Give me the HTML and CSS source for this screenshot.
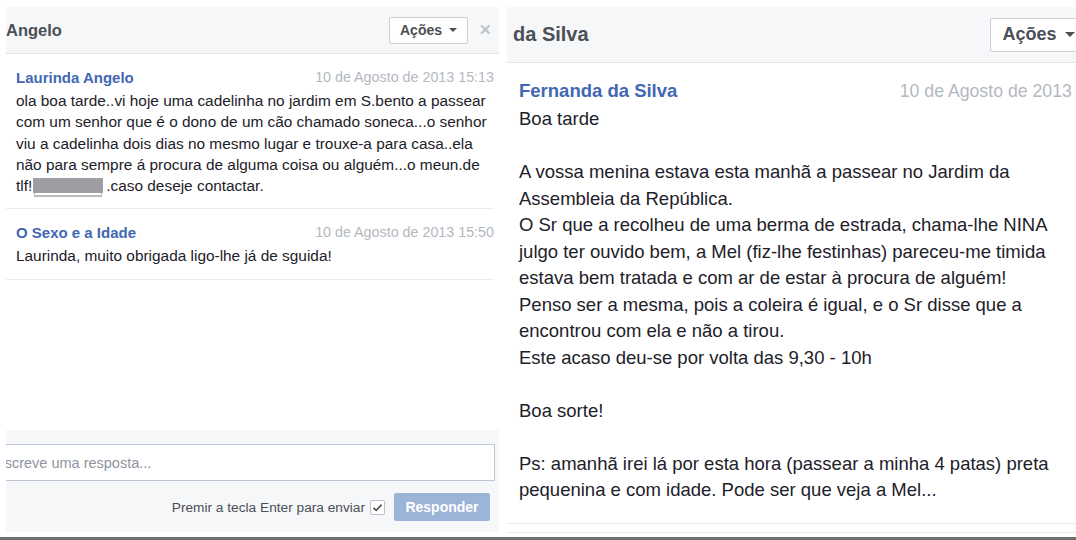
FILE: index.html
```html
<!DOCTYPE html>
<html lang="pt">

<head>
  <meta charset="UTF-8" />
  <meta name="viewport" content="width=device-width, initial-scale=1.0" />
  <title>Mensagens</title>
  <link rel="stylesheet" href="styles.css">
</head>

<body>
  <div class="ecra">
    <section class="conversa pequena">
      <div class="cabecalho">
        <h2 class="titulo">Angelo</h2>
        <button class="acoes">Ações <span class="seta"></span></button>
        <span class="fechar">&#x2715;</span>
      </div>
      <div class="mensagens">
        <div class="mensagem">
          <div class="topo">
            <span class="autor">Laurinda Angelo</span>
            <span class="data">10 de Agosto de 2013 15:13</span>
          </div>
          <p class="texto">ola boa tarde..vi hoje uma cadelinha no jardim em S.bento a passear<br>com um senhor que é o dono de um cão chamado soneca...o senhor<br>viu a cadelinha dois dias no mesmo lugar e trouxe-a para casa..ela<br>não para sempre á procura de alguma coisa ou alguém...o meun.de<br>tlf!<span class="oculto"></span>.caso deseje contactar.</p>
        </div>
        <div class="mensagem">
          <div class="topo">
            <span class="autor">O Sexo e a Idade</span>
            <span class="data">10 de Agosto de 2013 15:50</span>
          </div>
          <p class="texto">Laurinda, muito obrigada ligo-lhe já de sguida!</p>
        </div>
      </div>
      <div class="rodape">
        <input type="text" class="resposta" placeholder="Escreve uma resposta..." />
        <div class="enviar">
          <span class="dica">Premir a tecla Enter para enviar</span>
          <span class="caixa">
            <svg width="11" height="9" viewBox="0 0 11 9"><path d="M1.5 4.8 L4.2 7.4 L9.6 1.6" fill="none" stroke="#4b4f56" stroke-width="1.6"/></svg>
          </span>
          <button class="responder">Responder</button>
        </div>
      </div>
    </section>

    <section class="conversa grande">
      <div class="cabecalho">
        <h2 class="titulo">da Silva</h2>
        <button class="acoes">Ações <span class="seta"></span></button>
        <span class="fechar">&#x2715;</span>
      </div>
      <div class="mensagens">
        <div class="mensagem">
          <div class="topo">
            <span class="autor">Fernanda da Silva</span>
            <span class="data">10 de Agosto de 2013 15:02</span>
          </div>
          <p class="texto">Boa tarde<br><br>A vossa menina estava esta manhã a passear no Jardim da<br>Assembleia da República.<br>O Sr que a recolheu de uma berma de estrada, chama-lhe NINA<br>julgo ter ouvido bem, a Mel (fiz-lhe festinhas) pareceu-me timida<br>estava bem tratada e com ar de estar à procura de alguém!<br>Penso ser a mesma, pois a coleira é igual, e o Sr disse que a<br>encontrou com ela e não a tirou.<br>Este acaso deu-se por volta das 9,30 - 10h<br><br>Boa sorte!<br><br>Ps: amanhã irei lá por esta hora (passear a minha 4 patas) preta<br>pequenina e com idade. Pode ser que veja a Mel...</p>
        </div>
        <div class="fim"></div>
      </div>
    </section>
  </div>
  <div class="borda"></div>
</body>

</html>
```

FILE: styles.css
```css
* {
  box-sizing: border-box;
}

body {
  margin: 0;
  width: 1076px;
  height: 540px;
  overflow: hidden;
  background: #fff;
  font-family: "Liberation Sans", Arial, Helvetica, sans-serif;
  color: #1d2129;
}

.ecra {
  display: flex;
  align-items: flex-start;
  gap: 8px;
  height: 537px;
  padding: 7px 0 0 6px;
}

.conversa {
  display: flex;
  flex-direction: column;
  flex: none;
  overflow: hidden;
}

.conversa.pequena {
  width: 493px;
  height: 525px;
}

.conversa.grande {
  width: 615px;
  height: 530px;
}

.cabecalho {
  display: flex;
  align-items: center;
  background: #f6f7f9;
  border-bottom: 1px solid #e3e5e8;
}

.titulo {
  flex: 1;
  margin: 0;
  font-weight: bold;
  color: #4b4f56;
}

.acoes {
  display: flex;
  align-items: center;
  background: #fff;
  border: 1px solid #ccd0d5;
  border-radius: 2px;
  font-family: inherit;
  font-weight: bold;
  color: #4b4f56;
  padding: 0;
}

.seta {
  width: 0;
  height: 0;
  border-left: 4px solid transparent;
  border-right: 4px solid transparent;
  border-top: 4px solid #4b4f56;
}

.fechar {
  color: #bec2c9;
  font-weight: bold;
}

.mensagens {
  flex: 1;
}

.mensagem {
  border-bottom: 1px solid #e9ebee;
}

.topo {
  display: flex;
  justify-content: space-between;
  align-items: center;
  white-space: nowrap;
}

.autor {
  font-weight: bold;
  color: #4267b2;
}

.data {
  color: #b4b8bf;
}

.texto {
  margin: 0;
  white-space: nowrap;
}

/* conversa da esquerda */

.pequena .cabecalho {
  height: 47px;
  padding-right: 7px;
}

.pequena .titulo {
  font-size: 16.5px;
}

.pequena .acoes {
  height: 27px;
  width: 79px;
  justify-content: center;
  gap: 7px;
  font-size: 14px;
}

.pequena .fechar {
  font-size: 15px;
  margin-left: 11px;
}

.pequena .mensagem {
  margin-right: 5px;
  padding: 13px 0 12px 10px;
}

.pequena .topo {
  height: 20px;
  margin-bottom: 3px;
}

.pequena .autor {
  font-size: 15px;
}

.pequena .data {
  font-size: 14.3px;
}

.pequena .texto {
  font-size: 15.4px;
  line-height: 21.3px;
}

.oculto {
  display: inline-block;
  width: 70px;
  height: 15px;
  margin: 0 3px 0 1px;
  vertical-align: -2px;
  background: #9d9ea3;
  box-shadow: 0 4px 0 -2px #fff, 0 5px 0 -1px #bbb;
}

.rodape {
  background: #f6f7f9;
  height: 102px;
  padding: 14px 9px 11px 0;
}

.resposta {
  display: block;
  width: 509px;
  height: 37px;
  margin: 0 0 0 -20px;
  padding: 0 0 0 8px;
  border: 1px solid #bdc7d8;
  font-family: inherit;
  font-size: 14.5px;
  outline: none;
}

.resposta::placeholder {
  color: #8d949e;
}

.enviar {
  display: flex;
  justify-content: flex-end;
  align-items: center;
  margin-top: 12px;
}

.dica {
  font-size: 13.7px;
  color: #4b4f56;
}

.caixa {
  display: flex;
  align-items: center;
  justify-content: center;
  width: 15px;
  height: 15px;
  margin-left: 5px;
  background: #fff;
  border: 1px solid #bec2c9;
  border-radius: 2px;
}

.responder {
  width: 96px;
  height: 28px;
  margin-left: 9px;
  background: #9cb4d8;
  border: none;
  border-radius: 2px;
  color: #fff;
  font-family: inherit;
  font-size: 14px;
  font-weight: bold;
}

/* conversa da direita, maior */

.grande .cabecalho {
  height: 56px;
  padding: 0 8px 0 6px;
}

.grande .titulo {
  font-size: 20px;
}

.grande .acoes {
  height: 34px;
  width: 97px;
  justify-content: center;
  gap: 8px;
  font-size: 18px;
}

.grande .seta {
  border-left-width: 5px;
  border-right-width: 5px;
  border-top-width: 5px;
}

.grande .fechar {
  font-size: 17px;
  margin-left: 13px;
}

.grande .mensagem {
  margin-right: 6px;
  padding: 16px 0 19px 12px;
}

.grande .topo {
  height: 24px;
  margin-right: -5px;
  margin-bottom: 3px;
}

.grande .autor {
  font-size: 18.5px;
}

.grande .data {
  font-size: 17.7px;
}

.grande .texto {
  font-size: 18.5px;
  line-height: 26.5px;
}

.fim {
  height: 9px;
  margin-right: 6px;
  border-bottom: 1px solid #e9ebee;
}

.borda {
  height: 3px;
  background: #6e6e6e;
}
```
